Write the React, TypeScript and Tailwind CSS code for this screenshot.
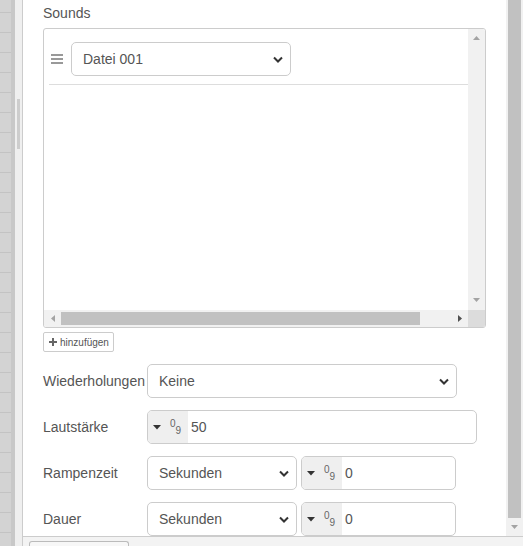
import React from "react";

const Chevron = () => (
  <svg width="10" height="7" viewBox="0 0 10 7" className="shrink-0">
    <path d="M1 1.5 L5 5.5 L9 1.5" fill="none" stroke="#333" strokeWidth="2" />
  </svg>
);

const Select = ({ value, className }: { value: string; className: string }) => (
  <div
    className={`flex items-center justify-between border border-[#cccccc] rounded-[5px] bg-white pl-[11px] pr-[7px] text-[14px] text-[#555555] ${className}`}
  >
    <span>{value}</span>
    <Chevron />
  </div>
);

const NumInput = ({ value, className }: { value: string; className: string }) => (
  <div className={`flex border border-[#cccccc] rounded-[5px] bg-white overflow-hidden ${className}`}>
    <div className="w-[40px] bg-[#efefef] flex items-center pl-[5px]">
      <svg width="8" height="5" viewBox="0 0 8 5">
        <path d="M0 0 L8 0 L4 4.5 Z" fill="#333" />
      </svg>
      <span className="ml-[9px] text-[10px] leading-none text-[#666666] relative -top-[3px]">0</span>
      <span className="text-[10px] leading-none text-[#666666] relative top-[4px]">9</span>
    </div>
    <div className="flex items-center pl-[3px] text-[14px] text-[#555555]">{value}</div>
  </div>
);

const Row = ({ label, children }: { label: string; children: React.ReactNode }) => (
  <div className="flex items-center h-[34px] mt-[12px]">
    <div className="w-[104px] shrink-0 whitespace-nowrap text-[14px] text-[#555555]">{label}</div>
    <div className="flex gap-[4px]">{children}</div>
  </div>
);

const Tri = ({ dir, color }: { dir: "up" | "down" | "left" | "right"; color: string }) => {
  const d = {
    up: "M0 4 L7 4 L3.5 0 Z",
    down: "M0 0 L7 0 L3.5 4 Z",
    left: "M4 0 L4 7 L0 3.5 Z",
    right: "M0 0 L0 7 L4 3.5 Z",
  }[dir];
  const horiz = dir === "left" || dir === "right";
  return (
    <svg width={horiz ? 4 : 7} height={horiz ? 7 : 4} viewBox={horiz ? "0 0 4 7" : "0 0 7 4"}>
      <path d={d} fill={color} />
    </svg>
  );
};

export default function App() {
  return (
    <div className="w-[523px] h-[546px] flex overflow-hidden bg-white font-['Liberation_Sans',Arial,sans-serif]">
      {/* workspace edge */}
      <div className="w-[11px] bg-[#d3d3d3] bg-[image:linear-gradient(to_bottom,#c3c3c3_1px,transparent_1px)] bg-[length:100%_20px] bg-[position:0_12px]" />
      <div className="w-[4px] bg-[#c8c8c8]" />
      <div className="w-[7px] bg-[#efefef] pt-[99px]">
        <div className="ml-[2px] w-[3px] h-[50px] bg-[#cdcdcd]" />
      </div>

      {/* tray */}
      <div className="flex-1 flex flex-col border-l border-[#cccccc] min-w-0">
        <div className="flex-1 flex min-h-0">
          <div className="flex-1 px-5 pt-[3px] min-w-0">
            <div className="h-5 leading-5 text-[14px] text-[#555555]">Sounds</div>

            {/* editable list */}
            <div className="mt-[5px] h-[300px] border border-[#cccccc] rounded-[3px] flex flex-col overflow-hidden">
              <div className="flex flex-1 min-h-0">
                <div className="flex-1 pl-[5px]">
                  <div className="flex items-center pt-[13px] pb-[8px] border-b border-[#dddddd]">
                    <svg width="12" height="10" viewBox="0 0 12 10" className="ml-[2px]">
                      <rect x="0" y="0" width="12" height="2" fill="#999" />
                      <rect x="0" y="4" width="12" height="2" fill="#999" />
                      <rect x="0" y="8" width="12" height="2" fill="#999" />
                    </svg>
                    <Select value="Datei 001" className="ml-[8px] w-[220px] h-[34px]" />
                  </div>
                </div>
                <div className="w-[17px] bg-[#f1f1f1] flex flex-col items-center justify-between pt-[7px] pb-[8px]">
                  <Tri dir="up" color="#a3a3a3" />
                  <Tri dir="down" color="#a3a3a3" />
                </div>
              </div>
              <div className="h-[17px] flex bg-[#f1f1f1]">
                <div className="w-[17px] flex items-center justify-center">
                  <Tri dir="left" color="#a3a3a3" />
                </div>
                <div className="flex-1 py-[2px]">
                  <div className="w-[359px] h-full bg-[#c1c1c1]" />
                </div>
                <div className="w-[17px] flex items-center justify-center">
                  <Tri dir="right" color="#505050" />
                </div>
                <div className="w-[17px] bg-[#dcdcdc]" />
              </div>
            </div>

            <div className="mt-[4px] w-[71px] h-[20px] border border-[#cccccc] rounded-[2px] flex items-center pl-[5px] gap-[3px] text-[10px] text-[#555555]">
              <svg width="8" height="8" viewBox="0 0 8 8">
                <rect x="3" y="0" width="2" height="8" fill="#666" />
                <rect x="0" y="3" width="8" height="2" fill="#666" />
              </svg>
              <span>hinzufügen</span>
            </div>

            <Row label="Wiederholungen">
              <Select value="Keine" className="w-[310px] h-[34px]" />
            </Row>
            <Row label="Lautstärke">
              <NumInput value="50" className="w-[330px] h-[34px]" />
            </Row>
            <Row label="Rampenzeit">
              <Select value="Sekunden" className="w-[150px] h-[34px]" />
              <NumInput value="0" className="w-[155px] h-[34px]" />
            </Row>
            <Row label="Dauer">
              <Select value="Sekunden" className="w-[150px] h-[34px]" />
              <NumInput value="0" className="w-[155px] h-[34px]" />
            </Row>
          </div>

          {/* tray scrollbar */}
          <div className="w-[17px] bg-[#f1f1f1] flex flex-col">
            <div className="ml-[2px] w-[13px] h-[518px] bg-[#c1c1c1]" />
            <div className="flex-1 flex items-center justify-center">
              <Tri dir="down" color="#a3a3a3" />
            </div>
          </div>
        </div>

        {/* footer */}
        <div className="h-[10px] border-t border-[#cccccc] bg-[#f3f3f3] pl-[6px] pt-[4px]">
          <div className="w-[100px] h-full border border-b-0 border-[#bbbbbb] rounded-t-[3px] bg-[#f7f7f7]" />
        </div>
      </div>
    </div>
  );
}
